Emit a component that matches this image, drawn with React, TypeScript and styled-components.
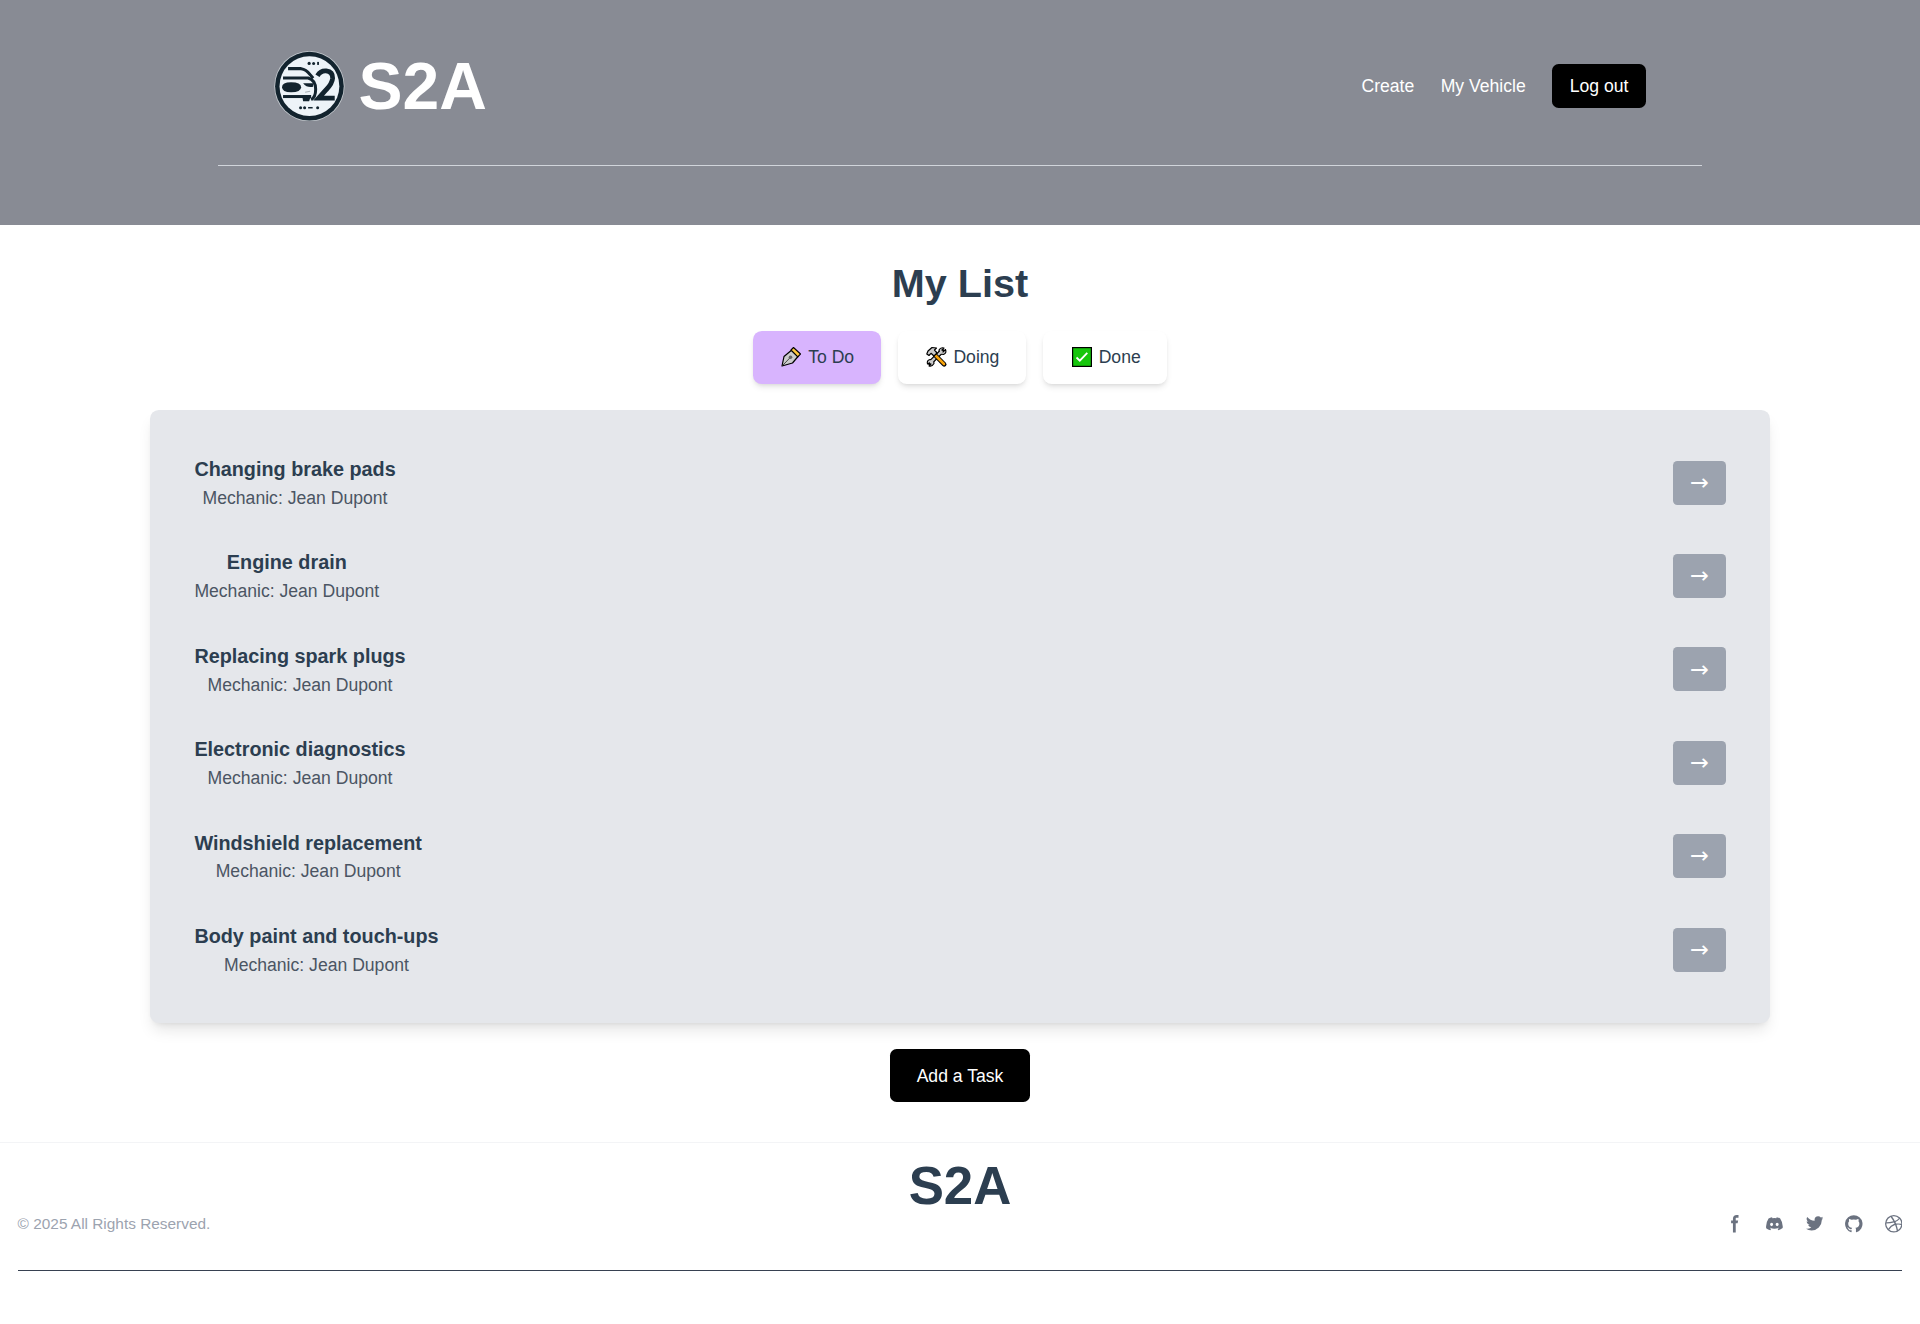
import React, { useState } from "react";
import styled, { createGlobalStyle } from "styled-components";

const GlobalStyle = createGlobalStyle`
  html { font-size: 17.6px; }
  *, *::before, *::after { box-sizing: border-box; }
  body {
    margin: 0;
    background: #fff;
    color: #2c3e50;
    font-family: "Liberation Sans", Arial, Helvetica, sans-serif;
    font-size: 1rem;
    line-height: 1.5;
    text-align: center;
  }
  h1, h2, h3, p { margin: 0; }
  button { font: inherit; border: 0; cursor: pointer; }
  a { color: inherit; text-decoration: none; }
`;

const Header = styled.header`
  height: 225px;
  padding: 50.8px 218px 0;
  background: #888b94;
  color: #fff;
`;

const HeaderBar = styled.div`
  display: flex;
  align-items: center;
  justify-content: space-between;
  height: 4rem;
  padding: 0 56px;
`;

const Brand = styled.a`
  display: flex;
  align-items: center;
  gap: 0.75rem;
`;

const Wordmark = styled.span<{ $size: string }>`
  display: block;
  font-size: ${(p) => p.$size};
  font-weight: 700;
  line-height: 1;
`;

const Emblem = styled.svg`
  width: 4.05rem;
  height: 4rem;
`;

const Nav = styled.nav`
  display: flex;
  align-items: center;
  gap: 1.5rem;
`;

const BlackButton = styled.button<{ $large?: boolean }>`
  padding: ${(p) => (p.$large ? "0.75rem 1.5rem" : "0.5rem 1rem")};
  border-radius: 0.375rem;
  background: #000;
  color: #fff;
`;

const Rule = styled.hr<{ $color: string }>`
  height: 1px;
  margin: 0;
  border: 0;
  background: ${(p) => p.$color};
`;

const HeaderRule = styled(Rule)`
  margin-top: 44px;
`;

const Main = styled.main`
  display: flex;
  flex-direction: column;
  align-items: center;
  gap: 1.5rem;
  padding: 35.5px 150.4px 39.3px;
`;

const Title = styled.h1`
  font-size: 2.25rem;
  line-height: 2.5rem;
`;

const Tabs = styled.div`
  display: flex;
  gap: 1rem;
`;

const Tab = styled.button<{ $active: boolean }>`
  display: flex;
  align-items: center;
  gap: 4.9px;
  padding: 0.75rem 1.5rem;
  border-radius: 0.5rem;
  background: ${(p) => (p.$active ? "#d8b4fe" : "#fff")};
  color: #2c3e50;
  box-shadow: 0 4px 6px -1px rgba(0, 0, 0, 0.1), 0 2px 4px -2px rgba(0, 0, 0, 0.1);
`;

const TabIcon = styled.svg`
  width: 24px;
  height: 22px;
`;

const Panel = styled.ul`
  width: 100%;
  margin: 0;
  padding: 1.5rem;
  list-style: none;
  border-radius: 0.5rem;
  background: #e5e7eb;
  box-shadow: 0 10px 15px -3px rgba(0, 0, 0, 0.1), 0 4px 6px -4px rgba(0, 0, 0, 0.1);
`;

const Task = styled.li`
  display: flex;
  align-items: center;
  justify-content: space-between;
  padding: 1rem;
  border-bottom: 1px solid #e5e7eb;
`;

const TaskName = styled.h3`
  font-size: 1.125rem;
  line-height: 1.75rem;
`;

const Mechanic = styled.p`
  color: #4b5563;
`;

const MoveButton = styled.button`
  display: flex;
  align-items: center;
  justify-content: center;
  width: 3rem;
  height: 2.5rem;
  padding: 0 0 1px;
  border-radius: 0.25rem;
  background: #9ca3af;
  color: #fff;
  font-family: "Noto Sans", "DejaVu Sans", sans-serif;
  font-size: 1.28rem;
  line-height: 1;
`;

const Footer = styled.footer`
  display: flex;
  flex-direction: column;
  padding: 1rem 1rem 0;
  border-top: 1px solid #f3f4f6;
`;

const FooterMark = styled.div`
  align-self: center;
`;

const FooterRow = styled.div`
  display: flex;
  align-items: center;
  justify-content: space-between;
  height: 22px;
  margin-bottom: 35px;
`;

const Copyright = styled.span`
  color: #9ca3af;
  font-size: 0.875rem;
`;

const Socials = styled.div`
  display: flex;
  gap: 22px;
  color: #6b7280;
`;

const SocialLink = styled.a`
  display: flex;
  svg { width: 1rem; height: 1rem; fill: currentColor; }
`;

const CarEmblem = () => (
  <Emblem viewBox="0 0 71 70">
    <circle cx="35.3" cy="35" r="35" fill="#c5cacf" />
    <circle cx="35.3" cy="35" r="34.2" fill="#12232e" />
    <circle cx="35.3" cy="35" r="29.8" fill="#edf3f8" />
    <g fill="none" stroke="#12232e" strokeWidth="3">
      <path d="M14 17.5H27Q32 18 36 23.5L39 27" />
      <path d="M9 26.8H34Q41.5 29 41.5 38Q41.5 46 37 48.5" />
      <path d="M9 45.3H37" />
    </g>
    <path d="M8 36Q8 31 17 31Q27 31 27 36Q27 41 17 41Q8 41 8 36Z" fill="#12232e" />
    <path d="M29 32H39V35.5Q33 37 29 32ZM28 44H37L35 50H29Z" fill="#12232e" />
    <path d="M31 41L36 40" stroke="#a8b0b6" />
    <path d="M43.3 24.5Q46.5 19.3 52 19.8Q58.7 20.8 58.4 27Q58 32.5 52 38.5L44.5 46.8H60.5" fill="none" stroke="#12232e" strokeWidth="4.8" />
    <g fill="#12232e">
      <circle cx="35" cy="12.3" r="1.6" /><circle cx="39.5" cy="12.3" r="1.5" />
      <rect x="43" y="10.8" width="1.8" height="3" />
      <circle cx="26.5" cy="56.5" r="1.5" /><circle cx="30.5" cy="56.5" r="1.5" />
      <rect x="34" y="55.7" width="4.5" height="1.5" /><circle cx="43.5" cy="56.5" r="1.5" />
    </g>
  </Emblem>
);

const PenIcon = () => (
  <TabIcon viewBox="0 0 24 22">
    <path d="M3 20L5 10.5L12.5 4.2L19 10.5L13.5 17Z" fill="#ccc" stroke="#000" strokeWidth="1.2" strokeLinejoin="round" />
    <path d="M12 4L14.5 1.5L21.5 8L18.8 10.8Z" fill="#ffc83d" stroke="#000" strokeWidth="1.1" strokeLinejoin="round" />
    <path d="M3.5 19.5L11 11.8" stroke="#444" />
    <circle cx="11.5" cy="11.3" r="1.8" fill="#666" />
  </TabIcon>
);

const ToolsIcon = () => (
  <TabIcon viewBox="0 0 24 22" strokeLinecap="round" strokeLinejoin="round">
    <path d="M5 17L17 5" stroke="#000" strokeWidth="4.6" />
    <path d="M19 2L16.5 4.5L18 6L20.5 3.5Q22 7 18.5 8.5L15 8L14 4Q15.5 1 19 2ZM4 20L6 18L5 16.5L2.5 18Q1.5 14.5 5 13.5L8.5 14L9 17.5Q7 21 4 20Z" fill="#ccc" stroke="#000" strokeWidth="1.1" />
    <path d="M5.8 16.2L16.5 5.5" stroke="#ccc" strokeWidth="2.4" />
    <path d="M10 9L19.2 18.3" stroke="#000" strokeWidth="4.6" />
    <path d="M10.5 9.5L19 18" stroke="#f7a30b" strokeWidth="2.6" />
    <path d="M1.8 8L3 5L7 1.5L11.5 2L9.5 4L12 7L9 10L6 7.3L4 9.5Z" fill="#ccc" stroke="#000" strokeWidth="1.2" />
  </TabIcon>
);

const CheckIcon = () => (
  <TabIcon viewBox="0 0 24 22">
    <rect x="2.6" y="1.6" width="18.8" height="18.8" fill="#16c60c" stroke="#000" strokeWidth="1.2" />
    <path d="M6.5 11.5L9.8 14.7L17.3 6.8" fill="none" stroke="#fff" strokeWidth="1.8" />
  </TabIcon>
);

const tabs = [
  { label: "To Do", Icon: PenIcon },
  { label: "Doing", Icon: ToolsIcon },
  { label: "Done", Icon: CheckIcon },
];

const tasks = [
  "Changing brake pads",
  "Engine drain",
  "Replacing spark plugs",
  "Electronic diagnostics",
  "Windshield replacement",
  "Body paint and touch-ups",
];

const socials = [
  {
    name: "Facebook",
    box: "0 0 8 19",
    d: "M6.135 3H8V0H6.135a4.147 4.147 0 0 0-4.142 4.142V6H0v3h2v9.938h3V9h2.021l.592-3H5V3.591A.6.6 0 0 1 5.592 3h.543Z",
  },
  {
    name: "Discord",
    box: "0 0 21 16",
    d: "M16.942 1.556a16.3 16.3 0 0 0-4.126-1.3 12.04 12.04 0 0 0-.529 1.1 15.175 15.175 0 0 0-4.573 0 11.585 11.585 0 0 0-.535-1.1 16.274 16.274 0 0 0-4.129 1.3A17.392 17.392 0 0 0 .182 13.218a15.785 15.785 0 0 0 4.963 2.521c.41-.564.773-1.16 1.084-1.785a10.63 10.63 0 0 1-1.706-.83c.143-.106.283-.217.418-.33a11.664 11.664 0 0 0 10.118 0c.137.113.277.224.418.33-.544.328-1.116.606-1.71.832a12.52 12.52 0 0 0 1.084 1.785 16.46 16.46 0 0 0 5.064-2.595 17.286 17.286 0 0 0-2.973-11.59ZM6.678 10.813a1.941 1.941 0 0 1-1.8-2.045 1.93 1.93 0 0 1 1.8-2.047 1.919 1.919 0 0 1 1.8 2.047 1.93 1.93 0 0 1-1.8 2.045Zm6.644 0a1.94 1.94 0 0 1-1.8-2.045 1.93 1.93 0 0 1 1.8-2.047 1.918 1.918 0 0 1 1.8 2.047 1.93 1.93 0 0 1-1.8 2.045Z",
  },
  {
    name: "Twitter",
    box: "0 0 20 17",
    d: "M20 1.892a8.178 8.178 0 0 1-2.355.635 4.074 4.074 0 0 0 1.8-2.235 8.344 8.344 0 0 1-2.605.98A4.13 4.13 0 0 0 13.85 0a4.068 4.068 0 0 0-4.1 4.038 4 4 0 0 0 .105.919A11.705 11.705 0 0 1 1.4.734a4.006 4.006 0 0 0 1.268 5.392 4.165 4.165 0 0 1-1.859-.5v.05A4.057 4.057 0 0 0 4.1 9.635a4.19 4.19 0 0 1-1.856.07 4.108 4.108 0 0 0 3.831 2.807A8.36 8.36 0 0 1 0 14.184 11.732 11.732 0 0 0 6.291 16 11.502 11.502 0 0 0 17.964 4.5c0-.177 0-.35-.012-.523A8.143 8.143 0 0 0 20 1.892Z",
  },
  {
    name: "GitHub",
    box: "0 0 20 20",
    d: "M10 .333A9.911 9.911 0 0 0 6.866 19.65c.5.092.678-.215.678-.477 0-.237-.01-1.017-.014-1.845-2.757.6-3.338-1.169-3.338-1.169a2.627 2.627 0 0 0-1.1-1.451c-.9-.615.07-.6.07-.6a2.084 2.084 0 0 1 1.518 1.021 2.11 2.11 0 0 0 2.884.823c.044-.503.268-.973.63-1.325-2.2-.25-4.516-1.1-4.516-4.9A3.832 3.832 0 0 1 4.7 7.068a3.56 3.56 0 0 1 .095-2.623s.832-.266 2.726 1.016a9.409 9.409 0 0 1 4.962 0c1.89-1.282 2.717-1.016 2.717-1.016.366.83.402 1.768.1 2.623a3.827 3.827 0 0 1 1.02 2.659c0 3.807-2.319 4.644-4.525 4.889a2.366 2.366 0 0 1 .673 1.834c0 1.326-.012 2.394-.012 2.72 0 .263.18.572.681.475A9.911 9.911 0 0 0 10 .333Z",
  },
  {
    name: "Dribbble",
    box: "0 0 20 20",
    d: "M10 0a10 10 0 1 0 10 10A10.009 10.009 0 0 0 10 0Zm6.613 4.614a8.523 8.523 0 0 1 1.93 5.32 20.094 20.094 0 0 0-5.949-.274c-.059-.149-.122-.292-.184-.441a23.879 23.879 0 0 0-.566-1.239 11.41 11.41 0 0 0 4.769-3.366ZM8 1.707a8.821 8.821 0 0 1 2-.238 8.5 8.5 0 0 1 5.664 2.152 9.608 9.608 0 0 1-4.476 3.087A45.758 45.758 0 0 0 8 1.707ZM1.642 8.262a8.57 8.57 0 0 1 4.73-5.981A53.998 53.998 0 0 1 9.54 7.222a32.078 32.078 0 0 1-7.9 1.04h.002Zm2.01 7.46a8.51 8.51 0 0 1-2.2-5.707v-.262a31.64 31.64 0 0 0 8.777-1.219c.243.477.477.964.692 1.449-.114.032-.227.067-.336.1a13.569 13.569 0 0 0-6.942 5.636l.009.003ZM10 18.556a8.508 8.508 0 0 1-5.243-1.8 11.717 11.717 0 0 1 6.7-5.332.509.509 0 0 1 .055-.02 35.65 35.65 0 0 1 1.819 6.476 8.476 8.476 0 0 1-3.331.676Zm4.772-1.462A37.232 37.232 0 0 0 13.113 11a12.513 12.513 0 0 1 5.321.364 8.56 8.56 0 0 1-3.66 5.73h-.002Z",
  },
];

export default function App() {
  const [active, setActive] = useState("To Do");
  return (
    <>
      <GlobalStyle />
      <Header>
        <HeaderBar>
          <Brand href="#">
            <CarEmblem />
            <Wordmark $size="3.75rem">S2A</Wordmark>
          </Brand>
          <Nav>
            <a href="#">Create</a>
            <a href="#">My Vehicle</a>
            <BlackButton>Log out</BlackButton>
          </Nav>
        </HeaderBar>
        <HeaderRule $color="#d1d5db" />
      </Header>
      <Main>
        <Title>My List</Title>
        <Tabs>
          {tabs.map(({ label, Icon }) => (
            <Tab key={label} $active={label === active} onClick={() => setActive(label)}>
              <Icon />
              {label}
            </Tab>
          ))}
        </Tabs>
        <Panel>
          {tasks.map((name) => (
            <Task key={name}>
              <div>
                <TaskName>{name}</TaskName>
                <Mechanic>Mechanic: Jean Dupont</Mechanic>
              </div>
              <MoveButton>→</MoveButton>
            </Task>
          ))}
        </Panel>
        <BlackButton $large>Add a Task</BlackButton>
      </Main>
      <Footer>
        <FooterMark>
          <Wordmark $size="3rem">S2A</Wordmark>
        </FooterMark>
        <FooterRow>
          <Copyright>© 2025 All Rights Reserved.</Copyright>
          <Socials>
            {socials.map((s) => (
              <SocialLink key={s.name} href="#">
                <svg viewBox={s.box}>
                  <path fillRule="evenodd" d={s.d} />
                </svg>
              </SocialLink>
            ))}
          </Socials>
        </FooterRow>
        <Rule $color="#374151" />
      </Footer>
    </>
  );
}
